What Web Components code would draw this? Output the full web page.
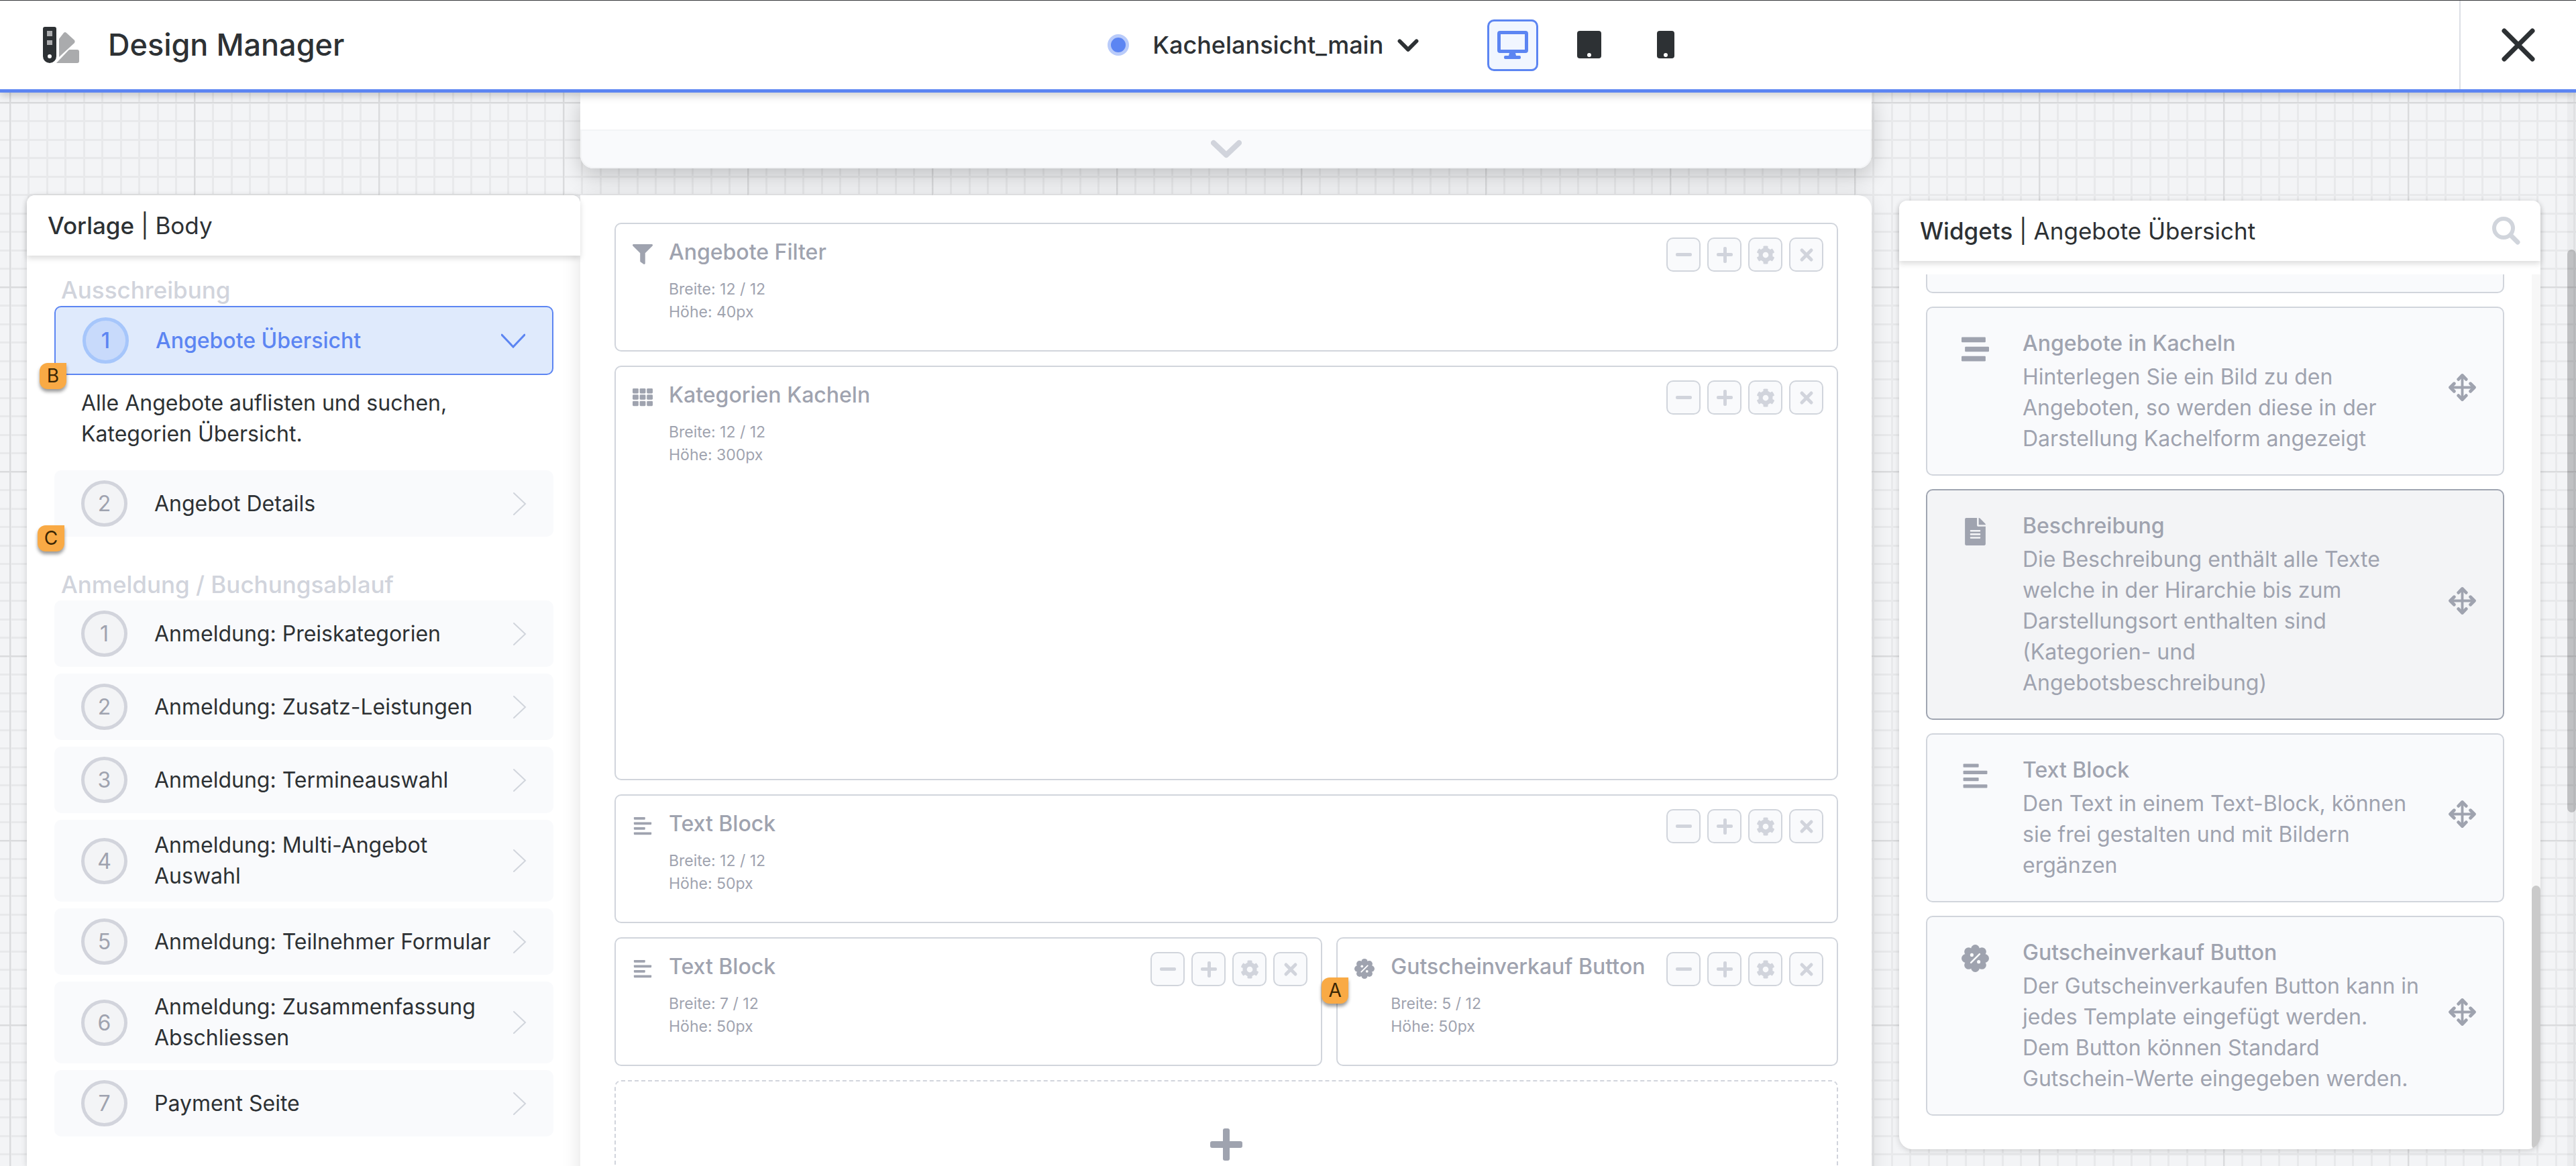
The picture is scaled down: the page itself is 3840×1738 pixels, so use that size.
<!DOCTYPE html>
<html lang="de">
<head>
<meta charset="utf-8">
<title>Design Manager</title>
<style>
  html, body { margin: 0; height: 100%; }
  body { overflow: hidden; font-family: Inter, "Open Sans", sans-serif; color: #2d3134; }
</style>
</head>
<body>
<dm-app></dm-app>

<script>
const ICONS = {
  filter: ['0 0 512 512', '<path d="M487.976 0H24.028C2.71 0-8.047 25.866 7.058 40.971L192 225.941V432c0 7.831 3.821 15.17 10.237 19.662l80 55.98C298.02 518.69 320 507.493 320 487.98V225.941l184.947-184.97C520.021 25.896 509.338 0 487.976 0z"/>'],
  grid: ['0 0 512 512', [32, 192, 352].map(y => [0, 181, 362].map(x => `<rect x="${x}" y="${y}" width="150" height="128" rx="24"/>`).join('')).join('')],
  text: ['0 0 512 512', '<rect x="32" y="32" width="288" height="64" rx="13"/><rect x="32" y="160" width="448" height="64" rx="13"/><rect x="32" y="288" width="288" height="64" rx="13"/><rect x="32" y="416" width="448" height="64" rx="13"/>'],
  stream: ['0 0 512 512', '<rect x="0" y="32" width="448" height="96" rx="16"/><rect x="64" y="208" width="448" height="96" rx="16"/><rect x="0" y="384" width="448" height="96" rx="16"/>'],
  file: ['-64 0 512 512', '<path d="M224 136V0H24C10.7 0 0 10.7 0 24v464c0 13.3 10.7 24 24 24h336c13.3 0 24-10.7 24-24V160H248c-13.2 0-24-10.8-24-24zm64 236c0 6.6-5.4 12-12 12H108c-6.6 0-12-5.4-12-12v-8c0-6.6 5.4-12 12-12h168c6.6 0 12 5.4 12 12v8zm0-64c0 6.6-5.4 12-12 12H108c-6.6 0-12-5.4-12-12v-8c0-6.6 5.4-12 12-12h168c6.6 0 12 5.4 12 12v8zm0-72v8c0 6.6-5.4 12-12 12H108c-6.6 0-12-5.4-12-12v-8c0-6.6 5.4-12 12-12h168c6.6 0 12 5.4 12 12zm96-114.1v6.1H256V0h6.1c6.4 0 12.5 2.5 17 7l97.9 98c4.5 4.5 7 10.6 7 16.9z"/>'],
  percent: ['0 0 512 512', '<circle cx="256" cy="256" r="200"/><circle cx="256" cy="80" r="80"/><circle cx="256" cy="432" r="80"/><circle cx="80" cy="256" r="80"/><circle cx="432" cy="256" r="80"/><circle cx="132" cy="132" r="80"/><circle cx="380" cy="132" r="80"/><circle cx="132" cy="380" r="80"/><circle cx="380" cy="380" r="80"/><g fill="var(--hole, #fff)"><circle cx="192" cy="192" r="32"/><circle cx="320" cy="320" r="32"/></g><path d="M176 336 336 176" stroke="var(--hole, #fff)" stroke-width="32" stroke-linecap="round"/>'],
  move: ['0 0 512 512', '<g fill="none" stroke="currentColor" stroke-width="48" stroke-linecap="round" stroke-linejoin="round"><path d="M256 40v432M40 256h432"/><path stroke-width="60" d="M184 104l72-72 72 72M184 408l72 72 72-72M104 184l-72 72 72 72M408 184l72 72-72 72"/></g>'],
  minus: ['0 0 24 24', '<rect x="0" y="9" width="24" height="5" rx="2"/>'],
  plus: ['0 0 24 24', '<rect x="0" y="9" width="24" height="5" rx="2"/><rect x="10" y="0" width="5" height="24" rx="2"/>'],
  bigplus: ['0 0 48 48', '<rect x="0" y="19" width="48" height="10" rx="3"/><rect x="19" y="0" width="10" height="48" rx="3"/>'],
  cog: ['0 0 512 512', '<path d="M487.4 315.7l-42.6-24.6c4.3-23.2 4.3-47 0-70.2l42.6-24.6c4.9-2.8 7.1-8.6 5.5-14-11.1-35.6-30-67.8-54.7-94.6-3.8-4.1-10-5.1-14.8-2.3L380.8 110c-17.9-15.4-38.5-27.3-60.8-35.1V25.8c0-5.6-3.9-10.5-9.4-11.7-36.7-8.2-74.3-7.8-109.2 0-5.5 1.2-9.4 6.1-9.4 11.7V75c-22.2 7.9-42.8 19.8-60.8 35.1L88.7 85.5c-4.9-2.8-11-1.9-14.8 2.3-24.7 26.7-43.6 58.9-54.7 94.6-1.7 5.4.6 11.2 5.5 14L67.3 221c-4.3 23.2-4.3 47 0 70.2l-42.6 24.6c-4.9 2.8-7.1 8.6-5.5 14 11.1 35.6 30 67.8 54.7 94.6 3.8 4.1 10 5.1 14.8 2.3l42.6-24.6c17.9 15.4 38.5 27.3 60.8 35.1v49.2c0 5.6 3.9 10.5 9.4 11.7 36.7 8.2 74.3 7.8 109.2 0 5.5-1.2 9.4-6.1 9.4-11.7v-49.2c22.2-7.9 42.8-19.8 60.8-35.1l42.6 24.6c4.9 2.8 11 1.9 14.8-2.3 24.7-26.7 43.6-58.9 54.7-94.6 1.5-5.5-.7-11.3-5.6-14.1zM256 336c-44.1 0-80-35.9-80-80s35.9-80 80-80 80 35.9 80 80-35.9 80-80 80z"/>'],
  times: ['0 0 24 24', '<path d="M5 5l14 14M19 5L5 19" stroke="currentColor" stroke-width="5" stroke-linecap="round"/>'],
  close: ['0 0 52 52', '<path d="M5 5l42 42M47 5L5 47" stroke="currentColor" stroke-width="7" stroke-linecap="round"/>'],
  search: ['0 0 42 42', '<g fill="none" stroke="currentColor"><circle cx="17" cy="17" r="14" stroke-width="6"/><path d="M28 28l10 10" stroke-width="7" stroke-linecap="round"/></g>'],
  right: ['0 0 36 36', '<path d="M17 2l17 16-17 16" fill="none" stroke="currentColor" stroke-width="2" stroke-linecap="round"/>'],
  down: ['0 0 36 36', '<path d="M1 9l17 18L35 9" fill="none" stroke="currentColor" stroke-width="3" stroke-linecap="round"/>'],
  chevron: ['0 0 28 28', '<path d="M3 9l11 11L25 9" fill="none" stroke="currentColor" stroke-width="5" stroke-linecap="round" stroke-linejoin="round"/>'],
  fold: ['0 0 46 28', '<path d="M4 5l19 18L42 5" fill="none" stroke="currentColor" stroke-width="8" stroke-linecap="round" stroke-linejoin="round"/>'],
  desktop: ['0 0 46 42', '<path fill-rule="evenodd" d="M4 0h38a4 4 0 0 1 4 4v25a4 4 0 0 1-4 4H27l1 4h5a2 2 0 0 1 2 2v1a2 2 0 0 1-2 2H12a2 2 0 0 1-2-2v-1a2 2 0 0 1 2-2h5l1-4H4a4 4 0 0 1-4-4V4a4 4 0 0 1 4-4zM5 5v23h36V5z"/>'],
  tablet: ['0 0 46 42', '<rect x="5" y="0" width="36" height="41" rx="4"/><circle cx="23" cy="36" r="3" fill="#fff"/>'],
  phone: ['0 0 46 42', '<rect x="10" y="0" width="26" height="41" rx="4"/><circle cx="23" cy="36" r="3" fill="#fff"/>'],
  swatch: ['0 0 54 54', '<g fill="#aaabad"><path d="M24 18l7-9a3 3 0 0 1 4 0l11 10a4 4 0 0 1 1 5L24 45z"/><path d="M20 54l19-20h12a3 3 0 0 1 3 3v14a3 3 0 0 1-3 3z"/></g><path d="M3 0h14a3 3 0 0 1 3 3v41a10 10 0 0 1-20 0V3a3 3 0 0 1 3-3z"/><path fill="#aaabad" d="M6 6h8v8H6zM6 20h8v7H6z"/><circle cx="10" cy="44" r="3" fill="#fff"/>']
};

function define(name, css, markup) {
  customElements.define(name, class extends HTMLElement {
    connectedCallback() {
      if (this.shadowRoot) return;
      const template = document.createElement('template');
      template.innerHTML = `<style>*{box-sizing:border-box}${css}</style>${markup(this)}`;
      this.attachShadow({ mode: 'open' }).append(template.content.cloneNode(true));
    }
  });
}
const a = (el, name) => el.getAttribute(name) || '';

define('dm-icon', `
  :host { display: block; flex: none; width: 30px; height: 30px; }
  svg { display: block; width: 100%; height: 100%; }
`, el => {
  const [box, shape] = ICONS[a(el, 'name')];
  return `<svg viewBox="${box}" fill="currentColor" aria-hidden="true">${shape}</svg>`;
});

define('dm-badge', `
  :host { position: absolute; z-index: 3; display: flex; align-items: center; justify-content: center;
    width: 40px; height: 39px; border-radius: 12px 0 12px 12px; background: #f9aa45; color: #3a2604;
    font-size: 28px; line-height: 39px; box-shadow: 0 4px 5px rgba(0,0,0,.4); }
`, () => '<slot></slot>');

define('dm-header', `
  :host { position: relative; z-index: 5; display: grid; grid-template-columns: 43% auto 1fr; flex: none; height: 138px;
    border-top: 1px solid #37393c; border-bottom: 5px solid #5c85f2; background: #fff; box-shadow: 0 4px 12px rgba(0,0,0,.2); }
  div { display: flex; align-items: center; }
  .brand { padding-left: 64px; gap: 43px; }
  .brand dm-icon { width: 54px; height: 54px; }
  h1 { margin: 0; font-size: 45px; font-weight: 500; line-height: 60px; }
  .dot { width: 32px; height: 32px; border-radius: 50%; border: 5px solid #b9cbfa; background: #5c85f2; margin-right: 35px; }
  select { appearance: none; border: 0; padding: 0; margin: 0; background: none; font: inherit; font-size: 36px; font-weight: 500; line-height: 48px; color: inherit; }
  .chevron { width: 32px; height: 32px; margin-left: 20px; }
  .devices { gap: 38px; margin-left: 102px; }
  button { display: flex; align-items: center; justify-content: center; padding: 0; border: 0; background: none; color: inherit; font: inherit; }
  .devices button { width: 76px; height: 77px; border: 3px solid transparent; border-radius: 10px; }
  .devices button.on { border-color: #5c85f2; background: #f1f6ff; color: #5c85f2; }
  .devices dm-icon { width: 46px; height: 42px; }
  .end { justify-content: flex-end; align-items: stretch; }
  .end button { width: 174px; border-left: 2px solid #dcdfe5; }
  .end dm-icon { width: 52px; height: 52px; }
`, () => `
  <div class="brand"><dm-icon name="swatch"></dm-icon><h1>Design Manager</h1></div>
  <div class="picker"><span class="dot"></span>
    <select aria-label="Ansicht"><option>Kachelansicht_main</option></select><dm-icon class="chevron" name="chevron"></dm-icon>
    <div class="devices">
      <button class="on" aria-label="Desktop"><dm-icon name="desktop"></dm-icon></button>
      <button aria-label="Tablet"><dm-icon name="tablet"></dm-icon></button>
      <button aria-label="Smartphone"><dm-icon name="phone"></dm-icon></button>
    </div>
  </div>
  <div class="end"><button aria-label="Schliessen"><dm-icon name="close"></dm-icon></button></div>`);

define('dm-panel', `
  :host { display: flex; flex-direction: column; min-height: 0; border-radius: 12px; background: #fff; box-shadow: 0 2px 10px rgba(0,0,0,.16); }
  header { position: relative; z-index: 2; display: flex; align-items: center; justify-content: space-between; flex: none; height: 90px; padding: 0 30px 0 31px;
    border-radius: 12px 12px 0 0; background: #fff; box-shadow: 0 4px 8px rgba(0,0,0,.14); }
  h2 { margin: 0; font-size: 35px; line-height: 48px; font-weight: 400; }
  b { font-weight: 500; }
  button { padding: 0; border: 0; background: none; color: #d1d5dc; }
  dm-icon { width: 42px; height: 42px; }
`, el => `
  <header><h2><b>${a(el, 'label')}</b> | ${a(el, 'sub')}</h2>${el.hasAttribute('search') ? '<button aria-label="Suchen"><dm-icon name="search"></dm-icon></button>' : ''}</header>
  <slot></slot>`);

define('dm-step', `
  :host { position: relative; display: block; }
  button { display: flex; align-items: center; gap: 40px; width: 100%; padding: 15px 40px; border: 0; border-radius: 10px;
    background: #f9fafc; color: inherit; font: inherit; font-size: 32px; line-height: 46px; text-align: left; }
  .num { flex: none; width: 69px; height: 69px; border: 5px solid #d2d4dc; border-radius: 50%; background: #f3f4f6; color: #9fa3af; line-height: 59px; text-align: center; }
  .label { flex: 1; }
  dm-icon { width: 36px; height: 36px; margin-left: -40px; color: #d1d5dc; }
  :host([active]) button { border: 2px solid #5c85f2; background: #dfeafc; color: #5c85f2; font-weight: 500; }
  :host([active]) .num { border-color: #a6c6fb; background: #c8dafb; color: #5c85f2; }
  :host([active]) dm-icon { color: #5c85f2; }
`, el => `
  <button><span class="num">${a(el, 'num')}</span><span class="label"><slot></slot></span><dm-icon name="${el.hasAttribute('active') ? 'down' : 'right'}"></dm-icon></button>
  <slot name="badge"></slot>`);

define('dm-steps', `
  :host { display: block; padding: 27px 40px 0 41px; }
  h3 { margin: 0; padding-left: 10px; font-size: 35px; font-weight: 500; line-height: 48px; color: #d1d4dc; }
  p { margin: 0; padding: 19px 40px 31px 40px; font-size: 32px; line-height: 46px; }
  .list { display: flex; flex-direction: column; gap: 10px; }
  section + section { margin-top: 47px; }
`, () => `
  <section><h3>Ausschreibung</h3>
    <dm-step num="1" active>Angebote Übersicht<dm-badge slot="badge" style="left:-22px;top:85px">B</dm-badge></dm-step>
    <p>Alle Angebote auflisten und suchen, Kategorien Übersicht.</p>
    <dm-step num="2">Angebot Details<dm-badge slot="badge" style="left:-25px;top:82px">C</dm-badge></dm-step>
  </section>
  <section><h3>Anmeldung / Buchungsablauf</h3>
    <div class="list">
      <dm-step num="1">Anmeldung: Preiskategorien</dm-step>
      <dm-step num="2">Anmeldung: Zusatz-Leistungen</dm-step>
      <dm-step num="3">Anmeldung: Termineauswahl</dm-step>
      <dm-step num="4">Anmeldung: Multi-Angebot Auswahl</dm-step>
      <dm-step num="5">Anmeldung: Teilnehmer Formular</dm-step>
      <dm-step num="6">Anmeldung: Zusammenfassung Abschliessen</dm-step>
      <dm-step num="7">Payment Seite</dm-step>
    </div>
  </section>`);

define('dm-block', `
  :host { position: relative; display: flex; align-items: flex-start; min-height: 192px; padding: 20px; border: 2px solid #d1d5dc; border-radius: 10px; color: #9fa3af; }
  .icon { display: flex; align-items: center; justify-content: center; width: 40px; height: 50px; margin-right: 19px; }
  .body { flex: 1; }
  h4 { margin: 0 0 16px; font-size: 32px; font-weight: 500; line-height: 44px; }
  p { margin: 0; font-size: 23px; line-height: 34px; }
  .tools { display: flex; gap: 10px; }
  button { display: flex; align-items: center; justify-content: center; width: 51px; height: 51px; padding: 0; border: 2px solid #d1d5dc; border-radius: 10px; background: #f9fafc; color: #d1d4dc; }
  .tools dm-icon { width: 24px; height: 24px; }
  .tools dm-icon[name=cog] { width: 28px; height: 28px; }
`, el => `
  <div class="icon"><dm-icon name="${a(el, 'icon')}"></dm-icon></div>
  <div class="body"><h4>${a(el, 'label')}</h4><p>Breite: ${a(el, 'cols')} / 12</p><p>Höhe: ${a(el, 'size')}</p></div>
  <div class="tools">
    <button aria-label="Kleiner"><dm-icon name="minus"></dm-icon></button>
    <button aria-label="Grösser"><dm-icon name="plus"></dm-icon></button>
    <button aria-label="Einstellungen"><dm-icon name="cog"></dm-icon></button>
    <button aria-label="Entfernen"><dm-icon name="times"></dm-icon></button>
  </div><slot></slot>`);

define('dm-canvas', `
  :host { position: relative; z-index: 1; display: flex; flex-direction: column; gap: 40px; min-width: 0; }
  .top { flex: none; padding-top: 55px; border-radius: 0 0 20px 20px; background: #fff; box-shadow: 0 12px 32px rgba(0,0,0,.2); }
  .fold { display: flex; align-items: center; justify-content: center; width: 100%; height: 58px; padding: 0; border: 2px solid #f3f4f6; border-radius: 0 0 20px 20px; background: #f9fafc; color: #d1d4dc; }
  .fold dm-icon { width: 46px; height: 28px; }
  .sheet { flex: 1; display: grid; grid-template-columns: repeat(12, 1fr); align-content: start; gap: 21px; padding: 41px 50px 41px 51px; border-radius: 0 20px 0 0; background: #fff; box-shadow: 0 4px 28px rgba(0,0,0,.12); }
  .full { grid-column: span 12; }
  .tall { min-height: 618px; }
  .seven { grid-column: span 7; }
  .five { grid-column: span 5; }
  .add { display: flex; align-items: center; justify-content: center; height: 192px; border: 2px dashed #d1d4dc; border-radius: 10px; background: none; color: #9fa3af; }
  .add dm-icon { width: 48px; height: 48px; }
`, () => `
  <div class="top"><button class="fold" aria-label="Aufklappen"><dm-icon name="fold"></dm-icon></button></div>
  <div class="sheet">
    <dm-block class="full" icon="filter" label="Angebote Filter" cols="12" size="40px"></dm-block>
    <dm-block class="full tall" icon="grid" label="Kategorien Kacheln" cols="12" size="300px"></dm-block>
    <dm-block class="full" icon="text" label="Text Block" cols="12" size="50px"></dm-block>
    <dm-block class="seven" icon="text" label="Text Block" cols="7" size="50px"></dm-block>
    <dm-block class="five" icon="percent" label="Gutscheinverkauf Button" cols="5" size="50px"><dm-badge style="left:-24px;top:58px">A</dm-badge></dm-block>
    <button class="full add" aria-label="Block hinzufügen"><dm-icon name="bigplus"></dm-icon></button>
  </div>`);

define('dm-widget', `
  :host { display: flex; flex: none; min-height: 120px; padding: 30px 40px; border: 2px solid #d1d5dc; border-radius: 10px; background: #f9fafc; color: #9fa3af; --hole: #f9fafc; }
  :host([active]) { border-color: #9fa5b1; background: #f3f4f6; }
  .icon { display: flex; align-items: center; justify-content: center; flex: none; width: 62px; height: 62px; margin-right: 40px; }
  .icon dm-icon, .move dm-icon { width: 41px; height: 41px; }
  .body { flex: 1; }
  h4 { margin: 0 0 4px; font-size: 32px; font-weight: 500; line-height: 46px; }
  p { margin: 0; font-size: 32px; line-height: 46px; }
  .move { display: flex; align-items: center; margin-left: 32px; padding-bottom: 12px; }
`, el => a(el, 'label') ? `
  <div class="icon"><dm-icon name="${a(el, 'icon')}"></dm-icon></div>
  <div class="body"><h4>${a(el, 'label')}</h4><p><slot></slot></p></div>
  <div class="move"><dm-icon name="move"></dm-icon></div>` : '');

define('dm-scrollbar', `
  :host { display: flex; flex: none; flex-direction: column; width: 13px; background: rgba(0,0,0,.03); }
  i { border-radius: 7px; background: rgba(0,0,0,.18); }
`, el => `<span style="flex:${a(el, 'before')}"></span><i style="flex:${a(el, 'thumb')}"></i><span style="flex:${a(el, 'after')}"></span>`);

define('dm-widgets', `
  :host { display: flex; flex: 1; min-height: 0; margin-top: 20px; overflow: hidden; border-radius: 0 0 20px 20px; }
  .list { display: flex; flex: 1; flex-direction: column; justify-content: flex-end; gap: 20px; padding: 0 41px 50px 40px; }
`, () => `
  <div class="list">
    <dm-widget></dm-widget>
    <dm-widget icon="stream" label="Angebote in Kacheln">Hinterlegen Sie ein Bild zu den Angeboten, so werden diese in der Darstellung Kachelform angezeigt</dm-widget>
    <dm-widget active icon="file" label="Beschreibung">Die Beschreibung enthält alle Texte welche in der Hirarchie bis zum Darstellungsort enthalten sind (Kategorien- und Angebotsbeschreibung)</dm-widget>
    <dm-widget icon="text" label="Text Block">Den Text in einem Text-Block, können sie frei gestalten und mit Bildern ergänzen</dm-widget>
    <dm-widget icon="percent" label="Gutscheinverkauf Button">Der Gutscheinverkaufen Button kann in jedes Template eingefügt werden.<br>Dem Button können Standard<br>Gutschein-Werte eingegeben werden.</dm-widget>
  </div>
  <dm-scrollbar before="911" thumb="393" after="0"></dm-scrollbar>`);

define('dm-app', `
  :host { display: flex; flex-direction: column; height: 100vh; overflow: hidden; background-color: #f3f4f6;
    background-image:
      linear-gradient(90deg, #dadbdd 2px, transparent 2px), linear-gradient(#dadbdd 2px, transparent 2px),
      linear-gradient(90deg, #e8e9eb 3px, transparent 3px, transparent 27px, #e8e9eb 27px, #e8e9eb 30px, transparent 30px),
      linear-gradient(#e8e9eb 3px, transparent 3px, transparent 27px, #e8e9eb 27px, #e8e9eb 30px, transparent 30px);
    background-size: 275px 275px, 275px 275px, 55px 55px, 55px 55px;
    background-position: 14px 152px; }
  main { display: flex; flex: 1; min-height: 0; padding-left: 40px; }
  .left { flex: none; width: 825px; margin-top: 153px; border-bottom-left-radius: 0; border-bottom-right-radius: 0; }
  dm-canvas { flex: 1; }
  .right { flex: none; width: 956px; margin: 161px 40px 25px 41px; border-radius: 12px 12px 20px 20px; }
`, () => `
  <dm-header></dm-header>
  <main>
    <dm-panel class="left" label="Vorlage" sub="Body"><dm-steps></dm-steps></dm-panel>
    <dm-canvas></dm-canvas>
    <dm-panel class="right" label="Widgets" sub="Angebote Übersicht" search><dm-widgets></dm-widgets></dm-panel>
    <dm-scrollbar before="234" thumb="839" after="527"></dm-scrollbar>
  </main>`);
</script>
</body>
</html>
